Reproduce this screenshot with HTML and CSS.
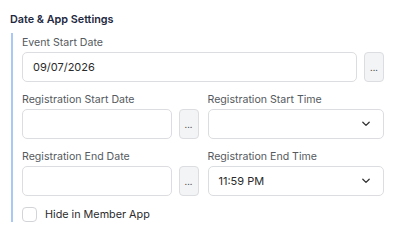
FILE: index.html
```html
<!DOCTYPE html>
<html>
<head>
<meta charset="utf-8">
<link rel="stylesheet" href="styles.css">
</head>
<body>
<section class="panel">
  <h2 class="title">Date &amp; App Settings</h2>
  <div class="group">
    <div class="field">
      <label class="label">Event Start Date</label>
      <div class="combo">
        <div class="input">09/07/2026</div>
        <button class="dots">...</button>
      </div>
    </div>
    <div class="row">
      <div class="field">
        <label class="label">Registration Start Date</label>
        <div class="combo">
          <div class="input"></div>
          <button class="dots">...</button>
        </div>
      </div>
      <div class="field">
        <label class="label">Registration Start Time</label>
        <div class="input select"><span></span>
          <svg class="chev" width="10" height="6" viewBox="0 0 10 6"><path d="M1.8 1.2 L5 4.4 L8.2 1.2" fill="none" stroke="#333" stroke-width="1.3" stroke-linecap="round" stroke-linejoin="round"/></svg>
        </div>
      </div>
    </div>
    <div class="row">
      <div class="field">
        <label class="label">Registration End Date</label>
        <div class="combo">
          <div class="input"></div>
          <button class="dots">...</button>
        </div>
      </div>
      <div class="field">
        <label class="label">Registration End Time</label>
        <div class="input select"><span>11:59 PM</span>
          <svg class="chev" width="10" height="6" viewBox="0 0 10 6"><path d="M1.8 1.2 L5 4.4 L8.2 1.2" fill="none" stroke="#333" stroke-width="1.3" stroke-linecap="round" stroke-linejoin="round"/></svg>
        </div>
      </div>
    </div>
    <label class="check"><span class="box"></span>Hide in Member App</label>
  </div>
</section>
</body>
</html>
```
FILE: styles.css
```css
* { box-sizing: border-box; }
html, body { margin: 0; background: #fff; }
body { font-family: Inter, "Noto Sans", sans-serif; color: #333; }
.panel { padding: 12px 11px 0 10px; }
.title { margin: 0 0 6px 0; font-size: 10.8px; font-weight: 600; color: #1e2840; line-height: 15px; }
.group { border-left: 2px solid #a9c8f3; margin-left: 1px; padding: 3px 0 0 9px; display: flex; flex-direction: column; gap: 11px; }
.field { display: flex; flex-direction: column; gap: 3px; min-width: 0; }
.label { font-size: 10.6px; color: #555a60; line-height: 13px; }
.combo { display: flex; gap: 7px; }
.input { flex: 1; height: 30px; border: 1px solid #dcdde0; border-radius: 5px; font-size: 11px; color: #2b2b2b; padding: 0 10px; display: flex; align-items: center; background: #fff; }
.dots { width: 20px; height: 30px; border: 1px solid #dcdde0; border-radius: 4px; background: #f3f4f6; font-family: inherit; font-size: 9px; color: #555; padding: 0; display: flex; align-items: center; justify-content: center; }
.row { display: grid; grid-template-columns: 1fr 1fr; gap: 9px; }
.select { justify-content: space-between; padding-right: 12px; }
.chev { display: block; }
.check { display: flex; align-items: center; gap: 8px; font-size: 10.8px; color: #2b2b2b; }
.box { width: 15px; height: 15px; border: 1px solid #d2d4d8; border-radius: 4px; background: #fff; }
```
